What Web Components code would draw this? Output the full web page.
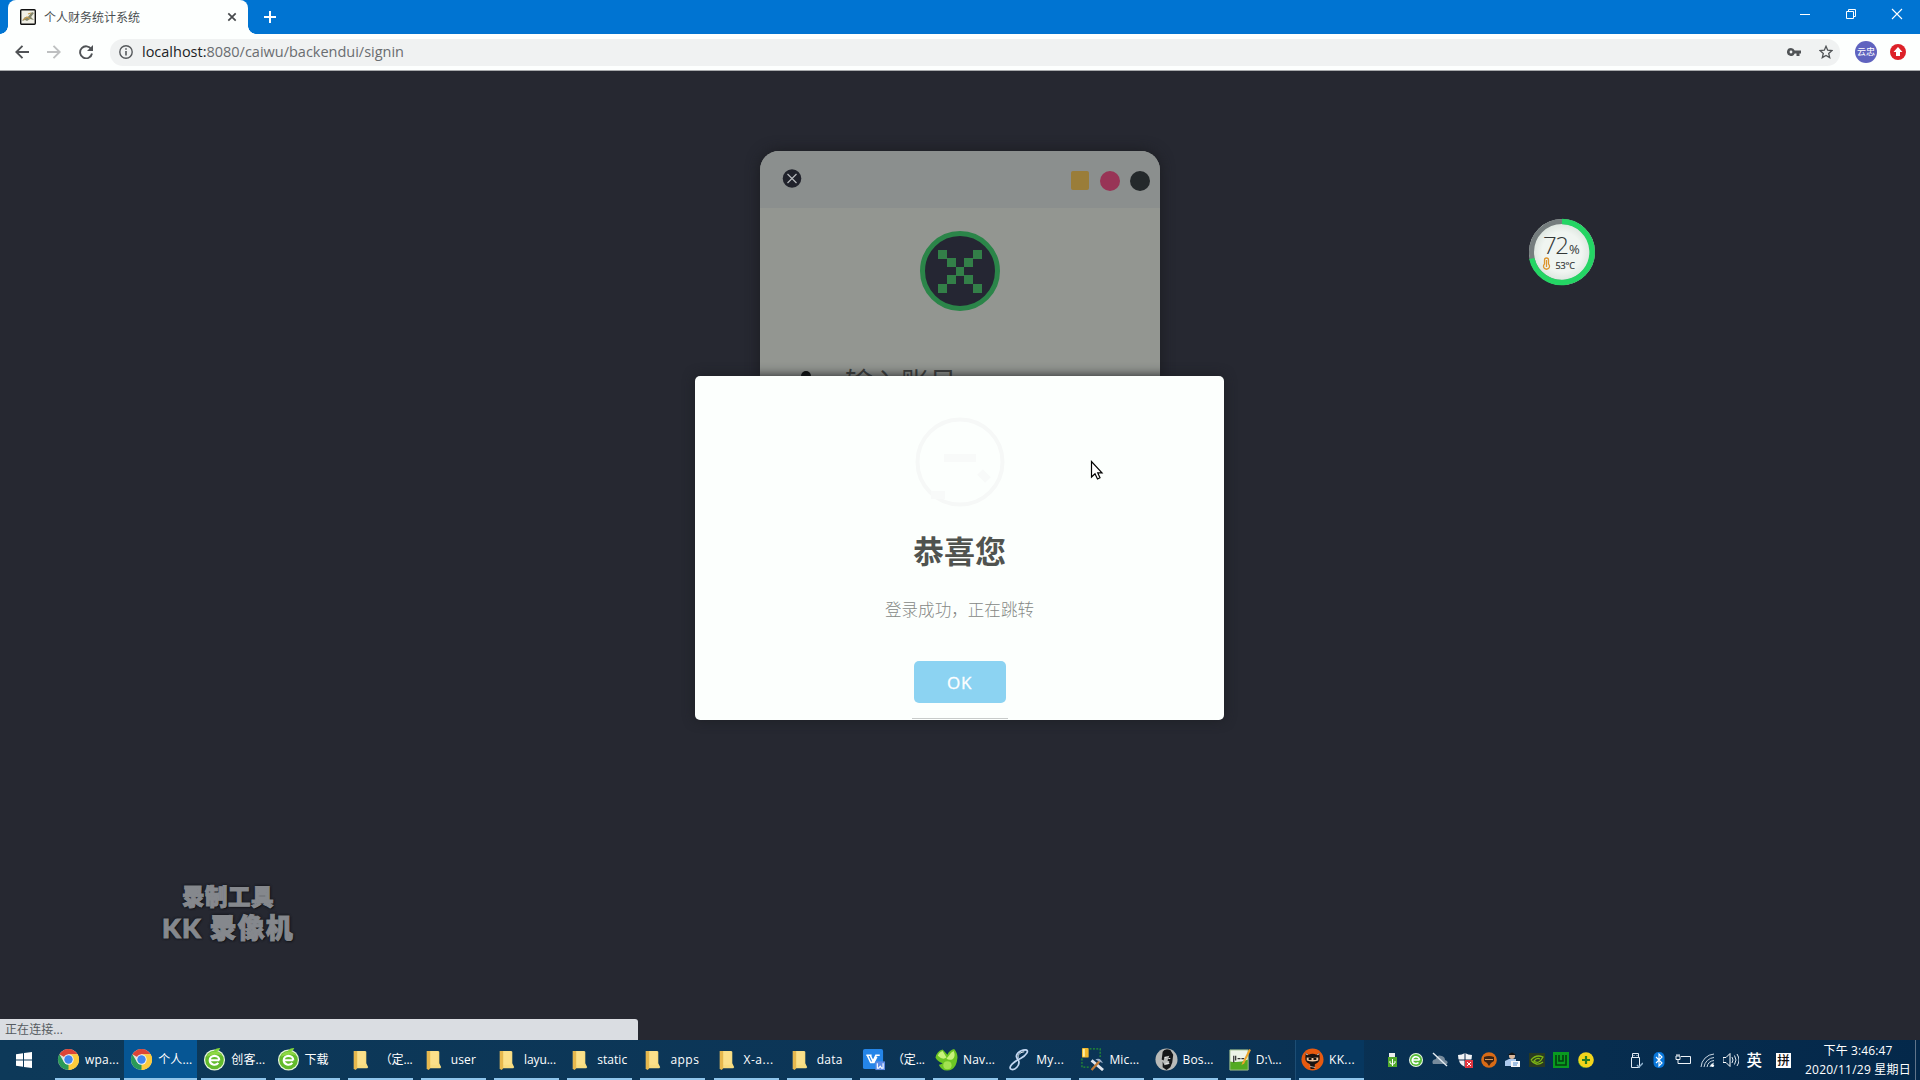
<!DOCTYPE html>
<html lang="zh-CN">
<head>
<meta charset="utf-8">
<title>个人财务统计系统</title>
<style>
html,body{margin:0;height:100%;overflow:hidden;background:#262831}
body{font-family:"Open Sans","Noto Sans CJK SC",sans-serif}
</style>
</head>
<body>
<desktop-screen></desktop-screen>
<script>
const def=(name,html,after)=>customElements.define(name,class extends HTMLElement{
  connectedCallback(){
    if(this.shadowRoot)return;
    const r=this.attachShadow({mode:'open'});
    r.innerHTML=typeof html==='function'?html(this):html;
    if(after)after(this,r);
  }
});

/* Text run whose letter spacing is adjusted to fill a given width */
def('fit-text','<style>:host{display:inline-block;white-space:nowrap}span{display:inline-block;white-space:pre}</style><span><slot></slot></span>',(el,r)=>{
  const w=+el.getAttribute('w');
  if(!w)return;
  const s=r.querySelector('span');
  const n=el.textContent.length;
  const real=s.getBoundingClientRect().width;
  s.style.letterSpacing=((w-real)/n)+'px';
  el.style.width=w+'px';
});

const chrome=`<circle cx="12" cy="12" r="11" fill="#e0e0d8"/><path d="M12 12L2.5 6.500A11 11 0 0 1 21.500 6.500H12z" fill="#dc4437"/><path d="M12 12L21.500 6.500A11 11 0 0 1 12 23L7.500 14.500z" fill="#fccb3d"/><path d="M12 17L12 23A11 11 0 0 1 2.500 6.500L7.300 14.800z" fill="#2a9a57"/><path d="M16 14.500L12 23A11 11 0 0 0 21.500 6.500H12L16 9z" fill="#fccb3d"/><circle cx="12" cy="12" r="5.400" fill="#f4f4f4"/><circle cx="12" cy="12" r="4.400" fill="#3f85ee"/>`;
const greenE=`<circle cx="12" cy="12.500" r="11" fill="#e6f5da"/><circle cx="12" cy="12.500" r="9.700" fill="#62bb2c"/><path d="M4 9a9 9 0 0 1 16-1q-6-3-16 1" fill="#8fd845"/><path d="M17 12.800H7.500M17 12.800a5 4.600 0 0 0-10 0 5 4.600 0 0 0 9 2.800" fill="none" stroke="#fff" stroke-width="2.200"/><path d="M11 3.500q2-3.500 7-3.500-1 4-7 3.500" fill="#82d83a"/>`;
const folder=`<path d="M4 3h12l1 1v12l2 4-1 1H7l-3 1z" fill="#f7dc80"/><path d="M4 3h3.500v18l-1.500 2-2-1z" fill="#e6b84e"/><path d="M8 3.500h7.500v14H8z" fill="#fbe08a"/>`;
const ICONS={
 chrome,e:greenE,folder,
 wps:`<rect x="1" y="1" width="21" height="21" rx="2" fill="#2585e8"/><path d="M4.500 7.500h5.500l-1.500 0 3 6.500 3-6.500h4M5.500 7.500l3.500 7.500h3.500l3-6" fill="none" stroke="#fff" stroke-width="1.600"/><rect x="14" y="14" width="10" height="9" fill="#5e8be4"/><path d="M16 16v5h1.500l1.500-2 1.500 2H22v-5" fill="none" stroke="#fff" stroke-width="1.200"/>`,
 nav:`<path d="M.5 10Q2 3 8 1.500L13 7q2-5 7-6 3.500 4 3.500 9-.5 5-2 8-3 5.500-9 5.500-6 0-8.500-6 2.500 0 4-1.500-6-2-7.500-6" fill="#6cc524"/><path d="M3 8q1-4 5-5l4 7q-4 3-9-2M14.500 8q2-4 5-5 2.500 6-1.500 9-4 1-6-1" fill="#c8f27c"/><circle cx="13" cy="18" r="4.300" fill="#a2e250"/>`,
 my:`<path d="M10 11C6 8 12 2 18 2c5 0 1 6-5 9C6 14 0 20 3 22c4 2 10-4 8-9l-2-3" fill="none" stroke="#c3d7f2" stroke-width="1.800"/><path d="M11 10C9 7 14 4 17 4" fill="none" stroke="#fff"/>`,
 mic:`<path d="M9 1h11v9M1 11v9h9" fill="none" stroke="#279530" stroke-width="1.300" stroke-dasharray="2 1.500"/><rect x="1" y="0" width="7" height="10" rx="1" fill="#f2b92e"/><path d="M2 1h2v8H2z" fill="#fff0a0"/><path d="M11 13l12 10" stroke="#e0e5ed" stroke-width="3"/><path d="M20 13L11 23" stroke="#c07a36" stroke-width="2.500"/><path d="M15 12q5-3 8 4l-4-2z" fill="#9bb0cc"/>`,
 bos:`<circle cx="12" cy="12" r="11.500" fill="#b9bab8"/><path d="M8 4q2-4 8-2l3 5-1 8-2 5-4 3-4-3V14l2 4 4-1 1-3-2-1 2-5-5 1-1 4-2-1z" fill="#151618"/><path d="M10 10l2 0M14 11h2M11 16h4" stroke="#eee"/>`,
 np:`<path d="M2 2h19v21H2z" fill="#eef4e8"/><path d="M2 14q9 2 19-2v11H2z" fill="#53aa22"/><path d="M2 2h19v21H2z" fill="none" stroke="#9cbd88"/><path d="M6 8v7M8 8v5M10 11h3M14 11h3" stroke="#333" stroke-width="1.300"/><path d="M22 1l-7 14-1 3 3-2 7-14z" fill="#eba52c"/>`,
 kk:`<circle cx="12" cy="12" r="11.500" fill="#e65a10"/><path d="M4.500 10L5 5l3 2q4-2 8 0l3-2 .5 5q.500 5-5 7l-.5 5h-4l-.5-5q-5.500-2-5-7" fill="#181312"/><path d="M5 6l2 1M19 6l-2 1" stroke="#fff"/><path d="M6 10q6 1 12 0v3q-6 2-12 0z" fill="#f2c7a0"/><path d="M8 11.500h3M13 11.500h3" stroke="#111" stroke-width="2"/><path d="M9 19l6 1.500" stroke="#ddd" stroke-width=".7"/>`
};
/* Taskbar application button */
def('task-item',el=>`<style>
:host{display:block;width:73.18px;height:40px;flex:none}
.b{height:40px;display:flex;align-items:center;padding-left:2px;box-sizing:border-box;color:#fff;font-size:12px;border-bottom:2px solid #8fc5eb;width:65px;white-space:nowrap}
:host([on]) .b{margin-left:-4px;padding-left:6px;width:73px;background:#065694}
:host([kk]) .b{background:#07375f;box-shadow:-3px 0 #07375f,-4px 0 #1d4d74}
svg{width:23px;height:23px;flex:none;margin:1px 5px 0 0}
.t{line-height:20px;margin-top:2px}
:host([pad]) .t{margin-left:2px}
</style><div class="b"><svg viewBox="0 0 24 24">${ICONS[el.getAttribute('icon')]}</svg><span class="t"><slot></slot></span></div>`);

def('browser-chrome',`<style>
:host{display:flex;flex-direction:column;height:71px;flex:none;background:#fdfffe}
.title{height:34px;background:#0074d2;display:flex;align-items:stretch;justify-content:space-between}
.tabs{display:flex;align-items:stretch}
.tab{width:240px;height:34px;box-sizing:border-box;background:#fdfffe;border-radius:8px 8px 0 0;display:flex;align-items:center;padding:0 11px 0 12px}
.foot{width:8px;height:8px;align-self:flex-end;background:radial-gradient(circle at 100% 0,#0074d2 7.500px,#fdfffe 8px)}
.foot.l{background:radial-gradient(circle at 0 0,#0074d2 7.500px,#fdfffe 8px)}
.tab svg:first-child{margin-right:8px}
.name{flex:1;font-size:12px;color:#4b4f52;line-height:18px;padding-top:1px}
.plus{margin:11px 0 0 8px}
.win{display:flex;padding:6px 15px 0 0;gap:30px}
.bar{height:36px;display:flex;align-items:center;box-sizing:border-box;padding:0 12px 0 15px}
.nav{display:flex;gap:18px}
.omni{flex:1;height:27px;margin-left:17px;border-radius:13px;background:#f0f2f2;display:flex;align-items:center;padding:0 7px 0 9px;}
.url{flex:1;margin-left:9px;font-size:14.500px;color:#6a6d70;line-height:22px}
b{font-weight:400;color:#202326}
.av{width:22px;height:22px;border-radius:50%;background:#5f63bf;color:#fff;font-size:9px;line-height:21px;text-align:center;margin:0 13px 0 15px}
.line{height:1px;background:#a8aaac}
</style>
<div class="title"><div class="tabs"><div class="foot l"></div><div class="tab">
<svg width="16" height="16" viewBox="0 0 16 16"><rect x=".7" y=".7" width="14.600" height="14.600" rx="1" fill="#f1f0e6" stroke="#111" stroke-width="1.400"/><path d="M2 12l3-4 2 1 5-6 2 1-3 4 3 3-4-1-3 2-2-1z" fill="#83866c"/><path d="M3 11l4-3 3 2M8 5l3-1" stroke="#c49c50" stroke-width="1.200" fill="none"/></svg>
<span class="name"><fit-text w="96">个人财务统计系统</fit-text></span>
<svg width="10" height="10" viewBox="0 0 10 10"><path d="M1.300 1.300l7.400 7.400M8.700 1.300L1.300 8.700" stroke="#46494c" stroke-width="1.700"/></svg></div><div class="foot"></div>
<svg class="plus" width="12" height="12" viewBox="0 0 12 12"><path d="M6 0v12M0 6h12" stroke="#fff" stroke-width="2"/></svg></div>
<div class="win">
<svg width="16" height="16" viewBox="0 0 16 16"><path d="M3 8.500h10" stroke="#fff"/></svg>
<svg width="16" height="16" viewBox="0 0 16 16"><path d="M3.500 5.500h7v7h-7zM5.500 5.500v-2h7v7h-2" fill="none" stroke="#fff"/></svg>
<svg width="16" height="16" viewBox="0 0 16 16"><path d="M3 3l10 10M13 3L3 13" stroke="#fff" stroke-width="1.100"/></svg></div></div>
<div class="bar"><div class="nav">
<svg width="14" height="14" viewBox="0 0 14 14"><path d="M14 7H1.500M7.500.8L1.300 7l6.200 6.200" fill="none" stroke="#505356" stroke-width="1.900"/></svg>
<svg width="14" height="14" viewBox="0 0 14 14"><path d="M0 7h12.500M6.500.8L12.700 7l-6.200 6.200" fill="none" stroke="#bec0c1" stroke-width="1.900"/></svg>
<svg width="14" height="14" viewBox="0 0 14 14"><path d="M12.300 4.300A6 6 0 1 0 13 8.500" fill="none" stroke="#505356" stroke-width="1.900"/><path d="M14 0v6H8z" fill="#505356"/></svg></div>
<div class="omni"><svg width="14" height="14" viewBox="0 0 14 14"><circle cx="7" cy="7" r="6.200" fill="none" stroke="#56595c" stroke-width="1.400"/><path d="M7 6v4.500M7 3.200v1.600" stroke="#56595c" stroke-width="1.600"/></svg>
<span class="url"><fit-text w="262"><b>localhost:</b>8080/caiwu/backendui/signin</fit-text></span>
<svg width="14" height="8" viewBox="0 0 14 8" style="margin-right:18px"><path fill-rule="evenodd" d="M4 0a4 4 0 0 1 3.700 2.500H14v3h-1.500V8h-3V5.500H7.700A4 4 0 1 1 4 0zM4 2.600a1.400 1.400 0 1 0 0 2.800 1.400 1.400 0 0 0 0-2.800z" fill="#505356"/></svg>
<svg width="14" height="14" viewBox="0 0 14 14"><path d="M7 1.300l1.700 3.900 4.200.4-3.200 2.800 1 4.200L7 10.400l-3.700 2.200 1-4.200L1.100 5.600l4.200-.4z" fill="none" stroke="#505356" stroke-width="1.300"/></svg></div>
<div class="av">云忠</div>
<svg width="16" height="16" viewBox="0 0 16 16" style="margin-right:2px"><circle cx="8" cy="8" r="8" fill="#dd2128"/><path d="M8 3l4.500 5H10v4H6V8H3.500z" fill="#fff"/></svg>
</div><div class="line"></div>`);

/* Sign-in card seen dimmed behind the alert */
def('login-card',`<style>
:host{display:block;width:400px;height:500px;background:#939691;border-radius:19px;box-shadow:0 0 14px #1b1c20;overflow:hidden}
.h{height:57px;background:#8b8f8e;display:flex;align-items:flex-start;padding:18px 10px 0 22px;box-sizing:border-box}
.dots{margin:2px 0 0 auto;display:flex;gap:10px}
i{width:20px;height:20px;border-radius:50%;background:#24292b}
.sq{border-radius:2px;background:#9a7d39;width:18px;height:19px;margin:0 1px}
.logo{display:block;margin:23px auto 56px}
.row{display:flex;padding-left:40px;align-items:flex-start}
.row span{font-size:28px;line-height:40px;color:#3c3e3c;margin-left:33px;margin-top:-6px;font-family:"Noto Sans CJK SC",sans-serif;font-weight:400}
</style><div class="h"><svg width="20" height="20" viewBox="0 0 20 20"><circle cx="10" cy="9.500" r="9.300" fill="#20222b"/><path d="M5.500 5l9 9M14.500 5l-9 9" stroke="#b5b8bb" stroke-width="1.200"/></svg>
<div class="dots"><i class="sq"></i><i style="background:#983456"></i><i></i></div></div>
<svg class="logo" width="80" height="80" viewBox="0 0 80 80"><circle cx="40" cy="40" r="37.500" fill="#252633" stroke="#2b8549" stroke-width="5"/><g fill="#337f48"><path d="M18 19h9v9h-9zM27 27h9v9h-9zM36 36h8v9h-8zM44 44h9v9h-9zM53 53h9v9h-9zM53 19h9v9h-9zM44 27h9v9h-9zM27 44h9v9h-9zM18 53h9v9h-9z"/></g></svg>
<div class="row"><svg width="12" height="24" viewBox="0 0 12 24" style="margin-top:4px"><circle cx="6" cy="5" r="5" fill="#080a0a"/><path d="M0 24V13h12v11z" fill="#080a0a"/></svg><span><fit-text w="112">输入账号</fit-text></span></div>`);

def('alert-modal',`<style>
:host{display:flex;flex-direction:column;align-items:center;width:529px;height:344px;background:#fcfffd;border-radius:5px;overflow:hidden;box-shadow:0 0 12px #1d1f24}
.ring{margin-top:40px;flex:none}
h2{margin:19px 0 0;font:700 31px/46px "Noto Sans CJK SC",sans-serif;color:#50534f}
p{margin:24px 0 0;font:300 16.500px/24px "Noto Sans CJK SC",sans-serif;color:#858885}
button{margin:40px 0 0;border:0;padding:0;width:92px;height:42px;flex:none;border-radius:5px;background:#8cd3f2;color:#fff;font:400 17px "Open Sans",sans-serif;-webkit-text-stroke:.3px #fff}
.l{margin-top:15px;width:96px;height:1px;flex:none;background:#c8cbca}
</style><svg class="ring" width="92" height="92" viewBox="0 0 92 92"><circle cx="46" cy="46" r="42.500" fill="none" stroke="#f6f8f7" stroke-width="4"/><path d="M30 42h32M66 56l8 8M17 79h14" stroke="#f8faf9" stroke-width="8"/></svg>
<h2><fit-text w="93">恭喜您</fit-text></h2><p><fit-text w="149">登录成功，正在跳转</fit-text></p><button><fit-text w="25">OK</fit-text></button><div class="l"></div>`);

def('load-gauge',`<style>:host{display:block;width:70px;height:70px}text{font-family:"Open Sans",sans-serif;fill:#333837}</style>
<svg width="70" height="70" viewBox="0 0 70 70"><defs><radialGradient id="g"><stop offset=".6" stop-color="#f0f5f1"/><stop offset="1" stop-color="#d4ded7"/></radialGradient></defs><circle cx="35" cy="35" r="33" fill="url(#g)"/><circle cx="35" cy="35" r="30.500" fill="none" stroke="#757d7e" stroke-width="5"/><path d="M35 4.500A30.500 30.500 0 1 1 4.800 41.500" fill="none" stroke="#24d564" stroke-width="5.500"/>
<text x="16" y="36.500" font-size="24" style="font-weight:300" textLength="26">72</text><text x="42" y="36.500" font-size="13" textLength="11">%</text><text x="28.500" y="51.500" font-size="9" textLength="19.500" stroke="#333837" stroke-width=".2">53°C</text>
<path d="M17.500 47v-4a2 2 0 0 1 4 0v4a3 3 0 1 1-4 0zM19.500 43v7" fill="none" stroke="#dd952d" stroke-width="1.300"/></svg>`);

def('recorder-mark',`<style>:host{display:flex;flex-direction:column;align-items:center;font-family:Lato,"Noto Sans CJK SC",sans-serif;font-weight:900;color:#85888d;width:134px;-webkit-text-stroke:1px #85888d;text-shadow:0 0 3px #101216,0 0 3px #101216,1px 1px 1px #101216}
.a,.b{display:flex}
.a{font-size:22.500px;line-height:28px}.b{font-size:27px;line-height:32px;margin-top:1px}</style>
<span class="a"><fit-text w="92">录制工具</fit-text></span><span class="b"><fit-text w="132">KK 录像机</fit-text></span>`);

def('status-bubble',`<style>:host{display:block;width:638px;height:21px;background:#dadde2;border-radius:0 3px 0 0;color:#555b60;font-size:12px;line-height:21px;padding-left:5px;box-sizing:border-box}</style><fit-text w="58">正在连接...</fit-text>`);

const tray=[
`<path d="M5 1h6v4H5z" fill="#eee"/><path d="M4 5h9v10H4z" fill="#51a92b"/><path d="M8.500 7v7M6 9v2l2.500 1.500L11 11V9" fill="none" stroke="#fff"/>`,
`<circle cx="8" cy="8" r="7" fill="#eaf7e4"/><circle cx="8" cy="8" r="6" fill="#58bc38"/><path d="M11.500 8H5M11.500 8a3.600 3.400 0 1 0-1 2.500" fill="none" stroke="#fff" stroke-width="1.700"/>`,
`<path d="M1 12Q-1 8 4 7q1-5 6-3 3 1 3 4 4 1 2 4z" fill="#778b9c"/><path d="M1 1l14 13" stroke="#e6edf3" stroke-width="1.400"/>`,
`<path d="M1 3q4 0 7-2 3 2 7 2 0 9-7 12Q1 12 1 3" fill="#f2f3f5"/><path d="M8 1v14M1 8h14" stroke="#122d4c"/><path d="M8 8h8v8H8z" fill="#e03540"/><path d="M10 10l4 4M14 10l-4 4" stroke="#fff"/>`,
`<circle cx="8" cy="8" r="7.800" fill="#d96b16"/><path d="M3 5q5-2 10 0v4l-3 2-2 3-2-3-3-2z" fill="#3b2416"/><path d="M4 7.500h8" stroke="#d9985b"/>`,
`<circle cx="7" cy="4" r="3" fill="#d9b79c"/><path d="M3 3q4-5 8 0z" fill="#111"/><path d="M0 14V9l4-2h7v7z" fill="#acc9ee"/><path d="M6 9h9v6H6z" fill="#f5f7fa"/><path d="M8 11h5M8 13h4" stroke="#4c88cc"/>`,
`<path d="M0 1h16v14H0z" fill="#293a21"/><path d="M2 8q5-6 12-3-4 8-9 4 3-4 6-2M2 8q5 7 12 2" fill="none" stroke="#7fb914" stroke-width="1.300"/>`,
`<path d="M0 0h16v16H0z" fill="#099b20"/><path d="M3 3v10h10V3M6 3v6h4V3" fill="none" stroke="#043e11" stroke-width="1.600"/>`,
`<circle cx="8" cy="8" r="7.800" fill="#f3d51c"/><path d="M1 5a8 8 0 0 0 8 10.800q-7 1-8.800-6z" fill="#48ad23"/><path d="M8 4v8M4 8h8" stroke="#287d20" stroke-width="2.200"/>`];
const sys=[
`<path d="M5.500 1.500h6v4h-6zM4.500 5.500h8v10h-8zM7 3v1M10 3v1" fill="none" stroke="#e2ebf4"/><path d="M10 13l2 2 4-4" fill="none" stroke="#8fb0cc" stroke-width="1.500"/>`,
`<rect x="2.500" width="11" height="16" rx="5" fill="#0877dc"/><path d="M5 5l6 6-3 3V2l3 3-6 6" fill="none" stroke="#fff" stroke-width="1.100"/>`,
`<path d="M6 4.500h9.500v7H5M1 4h4v3.500H1zM2 2v2M4 2v2M3 8v3.500h3" fill="none" stroke="#eef3f8"/>`,
`<path d="M2 15A14 14 0 0 1 15 2M5 15A11 11 0 0 1 15 5.500M8 15a8 8 0 0 1 7-6.500M11 15a5 5 0 0 1 4-4" fill="none" stroke="#cbd8e4"/><circle cx="13.500" cy="13.500" r="1.600" fill="#fff"/>`,
`<path d="M0 5.500h3l4-4v13l-4-4H0z" fill="none" stroke="#fff"/><path d="M9 5q2 3 0 6M11.500 3.500q3 4.500 0 9M14 2q4 6 0 12" fill="none" stroke="#e0e8f0"/>`];
const sv=a=>a.map(i=>`<svg width="16" height="16" viewBox="0 0 16 16">${i}</svg>`).join('');
def('task-bar',`<style>
:host{display:flex;height:40px;flex:none;background:linear-gradient(90deg,#0d3959,#0b3456 60%,#04284a);color:#fff;align-items:center}
.start{width:55px;flex:none;display:flex;padding-left:16px;box-sizing:border-box}
.items{display:flex;width:1329px;flex:none}
.t{display:flex;gap:8.200px;width:216px;flex:none}
.s{display:flex;gap:7.900px;margin-left:27px;flex:none}
.ime{font:500 15.500px/22px "Noto Sans CJK SC",sans-serif;margin:-2px 0 0 8px}
.pin{width:15px;height:15px;background:#fff;color:#111;font:500 12.500px/14px "Noto Sans CJK SC",sans-serif;text-align:center;margin-left:14px}
.clock{margin-left:auto;margin-right:4px;font-size:12px;line-height:19px;text-align:center;width:106px;margin-top:-1px}
.end{width:1px;height:40px;background:#60748a;margin-right:4px}
</style><div class="start"><svg width="16" height="16" viewBox="0 0 16 16"><path d="M0 2.200l7-1v6.300H0zM8 1.100L16 0v7.500H8zM0 8.500h7v6.300l-7-1zM8 8.500h8V16l-8-1.100z" fill="#fff"/></svg></div>
<div class="items">${[['chrome','wpa...',34],['chrome','个人...',34,'on'],['e','创客...',34],['e','下载',24],['folder','（定...',33,'pad'],['folder','user',25],['folder','layu...',32],['folder','static',30],['folder','apps',29],['folder','X-a...',30],['folder','data',26],['wps','（定...',33,'pad'],['nav','Nav...',32],['my','My...',28],['mic','Mic...',30],['bos','Bos...',31],['np','D:\\...',26],['kk','KK...',26,'kk']].map(([i,t,w,on])=>`<task-item icon="${i}" ${on||''}><fit-text w="${w}">${t}</fit-text></task-item>`).join('')}</div>
<div class="t">${sv(tray)}</div><div class="s">${sv(sys)}</div><span class="ime">英</span><span class="pin">拼</span>
<div class="clock"><fit-text w="69">下午 3:46:47</fit-text><br><fit-text w="106">2020/11/29 星期日</fit-text></div><div class="end"></div>`);

/* The page canvas carries free-floating windows, widgets and the pointer */
def('desktop-screen',`<style>
:host{display:flex;flex-direction:column;width:1920px;height:1080px;position:relative;overflow:hidden}
main{flex:1;min-height:0;background:#262831;display:flex;flex-direction:column;align-items:center;padding-top:80px;box-sizing:border-box;overflow:hidden}
login-card{flex:none}
alert-modal{position:absolute;left:695px;top:376px}
load-gauge{position:absolute;left:1527px;top:217px}
recorder-mark{position:absolute;left:161px;top:883px}
status-bubble{position:absolute;left:0;top:1019px}
.ptr{position:absolute;left:1090px;top:460px}
</style><browser-chrome></browser-chrome><main><login-card></login-card></main><task-bar></task-bar>
<alert-modal></alert-modal><load-gauge></load-gauge><recorder-mark></recorder-mark><status-bubble></status-bubble>
<svg class="ptr" width="14" height="21" viewBox="0 0 14 21"><path d="M1.500 1.500v15.500l3.500-3.300 2.500 5.300 2.500-1.200-2.300-5H12z" fill="#fff" stroke="#000" stroke-width="1.200"/></svg>`);
</script>
</body>
</html>
